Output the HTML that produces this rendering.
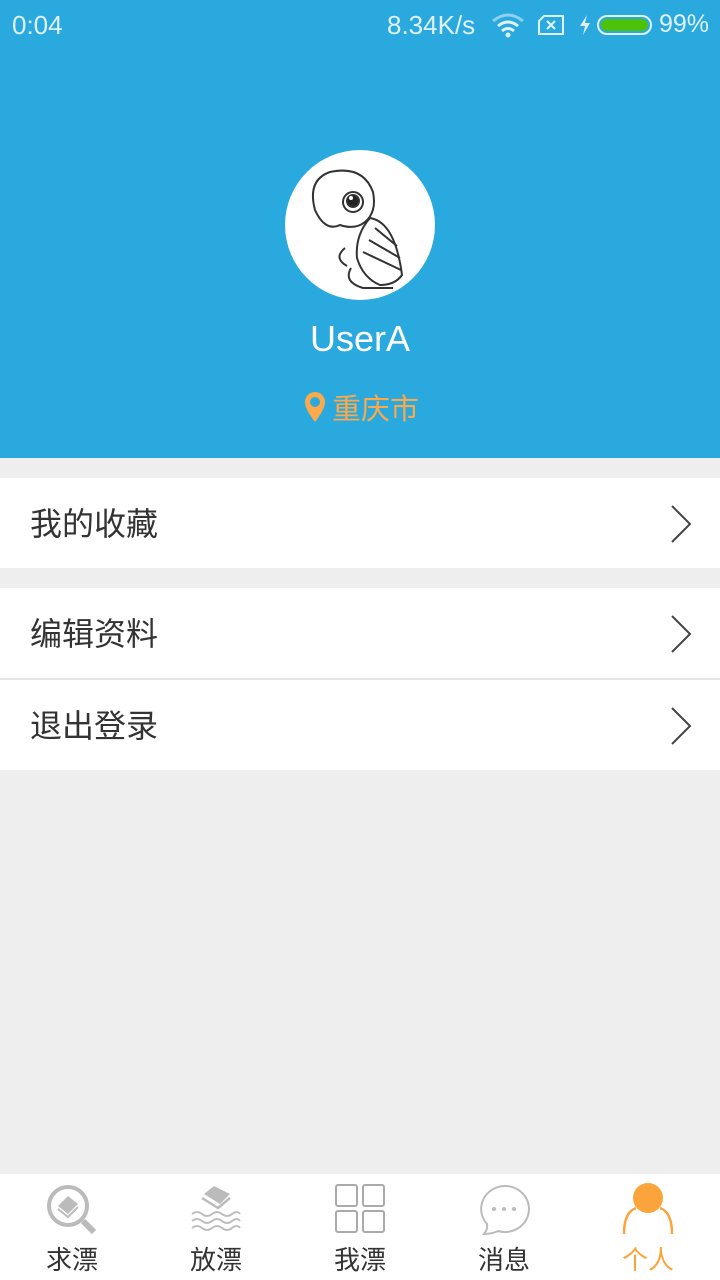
<!DOCTYPE html>
<html><head><meta charset="utf-8"><style>
*{margin:0;padding:0;box-sizing:border-box}
body{width:720px;height:1280px;background:#eeeeee;font-family:"Liberation Sans","Noto Sans CJK SC",sans-serif;position:relative;overflow:hidden}
.hdr{position:absolute;left:0;top:0;width:720px;height:458px;background:#2aa9df}
.sb{position:absolute;top:10px;color:#dff1fa;font-size:26px}
.row{position:absolute;left:0;width:720px;background:#fff;font-size:32px;color:#333;padding-left:30px;line-height:92px;height:90px}
.chev{position:absolute;right:28px;top:27px}
.nav{position:absolute;left:0;top:1174px;width:720px;height:106px;background:#fff}
.ni{position:absolute;top:66px;width:100px;text-align:center;font-size:26px;color:#333}
</style></head><body>
<div class="hdr"></div>
<div class="sb" style="left:12px">0:04</div>
<div class="sb" style="left:387px">8.34K/s</div>
<svg style="position:absolute;left:490px;top:12px" width="36" height="26" viewBox="0 0 36 26"><path d="M3 9 Q18 -3 33 9" stroke="#8fd0ee" stroke-width="3" fill="none"/><path d="M8 14 Q18 6 28 14" stroke="#dff1fa" stroke-width="3" fill="none"/><path d="M12 19 Q18 14 24 19" stroke="#dff1fa" stroke-width="3" fill="none"/><circle cx="18" cy="23" r="2.5" fill="#dff1fa"/></svg>
<svg style="position:absolute;left:537px;top:14px" width="28" height="22" viewBox="0 0 28 22"><path d="M7 2 H26 V20 H2 V7 Z" stroke="#dff1fa" stroke-width="2" fill="none"/><path d="M10 7 L18 15 M18 7 L10 15" stroke="#dff1fa" stroke-width="2.2"/></svg>
<svg style="position:absolute;left:578px;top:14px" width="14" height="22" viewBox="0 0 14 22"><path d="M9 1 L2 12 H7 L5 21 L12 9 H7 Z" fill="#dff1fa"/></svg>
<div style="position:absolute;left:597px;top:15px;width:55px;height:20px;border:2px solid #dff1fa;border-radius:10px;padding:2px"><div style="width:100%;height:100%;background:#4cc20a;border-radius:7px"></div></div>
<div class="sb" style="left:659px;font-size:25px">99%</div>
<div style="position:absolute;left:285px;top:150px;width:150px;height:150px;border-radius:50%;background:#fff;overflow:hidden">
<svg width="150" height="150" viewBox="0 0 150 150" fill="none" stroke="#333" stroke-width="2"><path d="M30 60 Q22 30 45 22 Q78 15 88 42 Q92 62 80 72 Q70 80 55 75 Q40 82 30 60Z"/><circle cx="68" cy="52" r="10"/><circle cx="68" cy="51" r="6" fill="#222"/><circle cx="66" cy="48" r="2" fill="#fff" stroke="none"/><path d="M85 68 Q110 72 117 125 Q110 135 95 135 Q78 128 72 108 Q70 85 85 68Z"/><path d="M90 78 L112 96 M84 90 L115 108 M78 102 L116 120"/><path d="M60 98 Q48 108 62 116 M66 118 Q58 132 78 138 L108 138"/></svg></div>
<div style="position:absolute;left:0;top:318px;width:720px;text-align:center;color:#fff;font-size:36px">UserA</div>
<svg style="position:absolute;left:304px;top:391px" width="22" height="32" viewBox="0 0 22 32"><path d="M11 1 A10 10 0 0 1 21 11 Q21 18 11 31 Q1 18 1 11 A10 10 0 0 1 11 1Z" fill="#fba94a"/><circle cx="11" cy="11" r="5" fill="#2aa9df"/></svg>
<div style="position:absolute;left:332px;top:386px;color:#fba94a;font-size:29px">重庆市</div>
<div class="row" style="top:478px">我的收藏<svg class="chev" width="22" height="38"><path d="M2 1 L20 19 L2 37" stroke="#444" stroke-width="2" fill="none"/></svg></div>
<div class="row" style="top:588px">编辑资料<svg class="chev" width="22" height="38"><path d="M2 1 L20 19 L2 37" stroke="#444" stroke-width="2" fill="none"/></svg></div>
<div style="position:absolute;top:678px;left:0;width:720px;height:2px;background:#e4e4e4"></div>
<div class="row" style="top:680px">退出登录<svg class="chev" width="22" height="38"><path d="M2 1 L20 19 L2 37" stroke="#444" stroke-width="2" fill="none"/></svg></div>
<div class="nav">
<svg style="position:absolute;left:46px;top:10px" width="54" height="52" viewBox="0 0 54 52"><circle cx="22" cy="22" r="19" stroke="#bbb" stroke-width="4" fill="none"/><path d="M37 37 L48 48" stroke="#bbb" stroke-width="6"/><path d="M12 22 L22 12 L32 20 L22 30Z" fill="#bbb"/><path d="M12 25 L22 33 L32 23" stroke="#bbb" stroke-width="2" fill="none"/></svg>
<svg style="position:absolute;left:190px;top:10px" width="52" height="48" viewBox="0 0 52 48"><path d="M14 10 L24 2 L40 10 L30 20Z" fill="#bbb"/><path d="M12 14 L28 24 L40 14" stroke="#bbb" stroke-width="2.5" fill="none"/><path d="M2 30 q5-4 10 0 t10 0 t10 0 t10 0 t8 0 M2 37 q5-4 10 0 t10 0 t10 0 t10 0 t8 0 M2 44 q5-4 10 0 t10 0 t10 0 t10 0 t8 0" stroke="#bbb" stroke-width="1.8" fill="none"/></svg>
<svg style="position:absolute;left:334px;top:10px" width="52" height="50" viewBox="0 0 52 50"><g stroke="#aaa" stroke-width="2" fill="none"><rect x="2" y="1" width="21" height="21" rx="2"/><rect x="29" y="1" width="21" height="21" rx="2"/><rect x="2" y="27" width="21" height="21" rx="2"/><rect x="29" y="27" width="21" height="21" rx="2"/></g></svg>
<svg style="position:absolute;left:478px;top:10px" width="54" height="52" viewBox="0 0 54 52"><path d="M26 2 A24 23 0 1 1 20 47 Q14 50 6 50 Q10 45 9 40 A24 23 0 0 1 26 2Z" stroke="#bbb" stroke-width="2" fill="none"/><circle cx="16" cy="25" r="2" fill="#bbb"/><circle cx="26" cy="25" r="2" fill="#bbb"/><circle cx="36" cy="25" r="2" fill="#bbb"/></svg>
<svg style="position:absolute;left:620px;top:8px" width="56" height="54" viewBox="0 0 56 54"><ellipse cx="28" cy="16" rx="15" ry="15" fill="#fba43c"/><path d="M4 52 Q4 30 16 26 M52 52 Q52 30 40 26" stroke="#fba43c" stroke-width="2.5" fill="none"/></svg>
<div class="ni" style="left:22px">求漂</div>
<div class="ni" style="left:166px">放漂</div>
<div class="ni" style="left:310px">我漂</div>
<div class="ni" style="left:454px">消息</div>
<div class="ni" style="left:598px;color:#fba43c">个人</div>
</div>
</body></html>
